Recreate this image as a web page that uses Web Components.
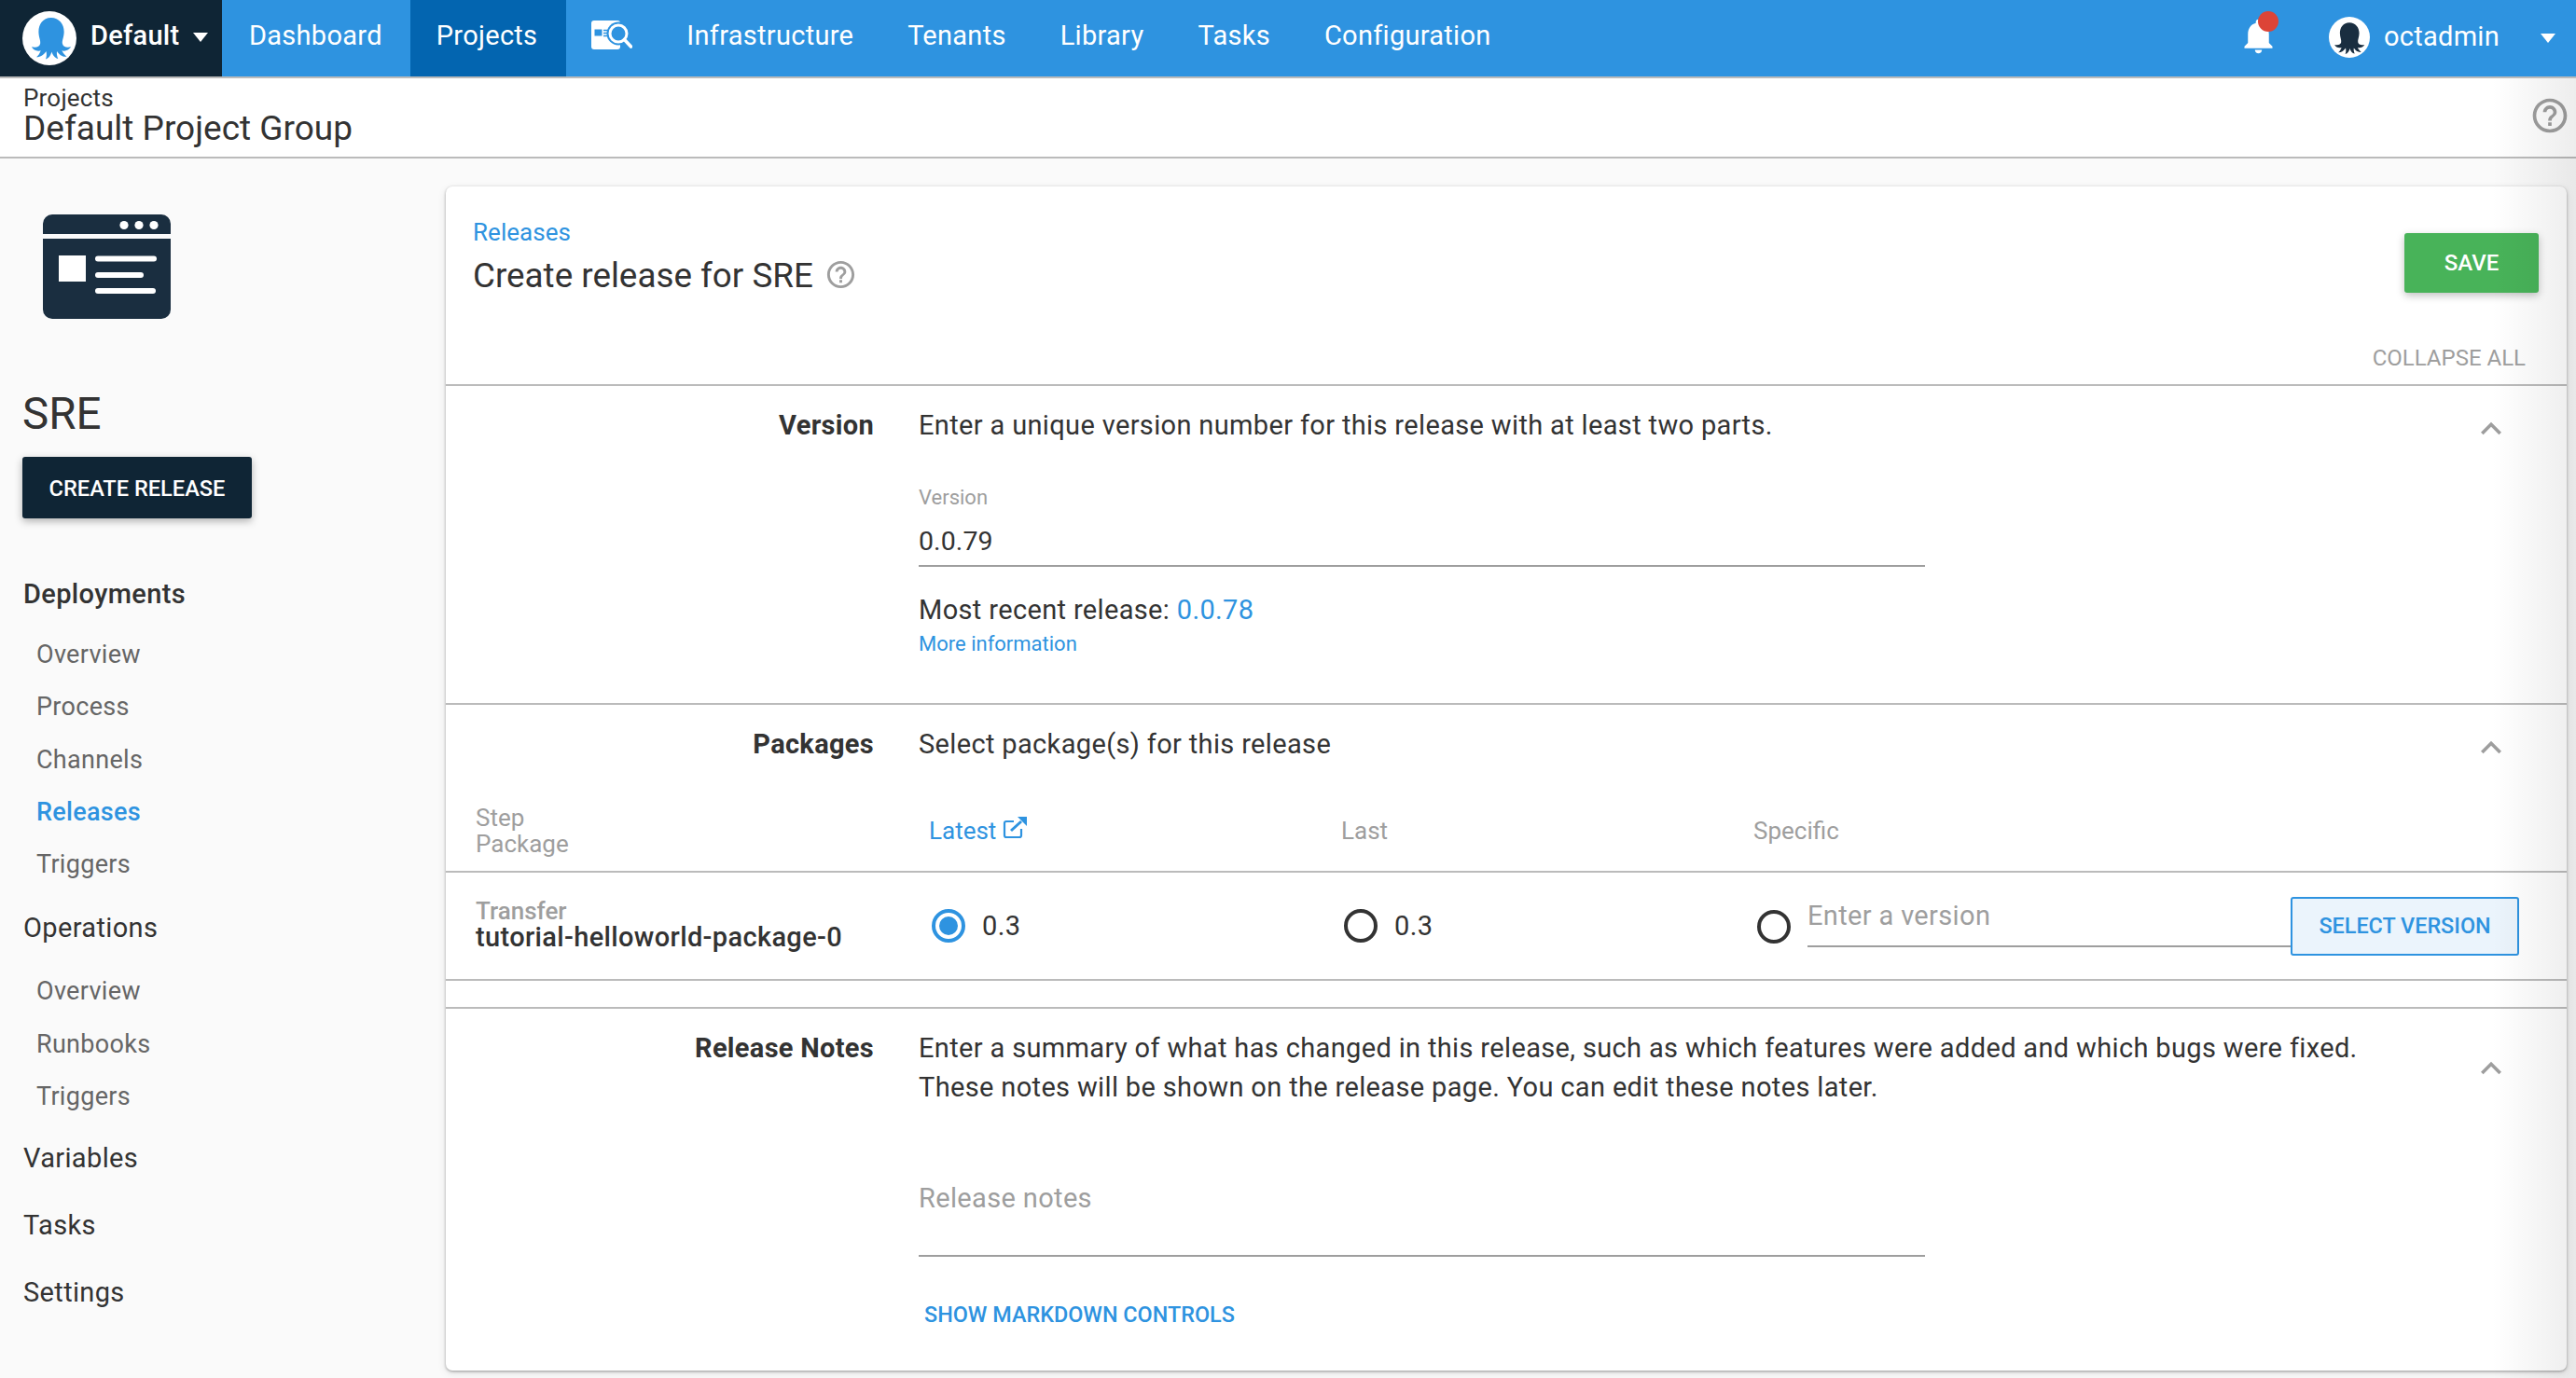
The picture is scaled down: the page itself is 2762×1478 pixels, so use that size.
<!DOCTYPE html>
<html lang="en">
<head>
<meta charset="utf-8">
<title>Create release for SRE</title>
<style>
    html, body {
        margin: 0;
        padding: 0;
        height: 100%;
        overflow: hidden;
        background-color: #fafafa;
        font-family: Roboto, "Liberation Sans", sans-serif;
        color: #333;
    }
</style>
</head>
<body>
<app-page>
    <top-bar slot="top"></top-bar>
    <sub-header slot="top" label="Projects" heading="Default Project Group"></sub-header>
    <side-nav slot="side"></side-nav>
    <page-card slot="main">
        <card-header></card-header>
        <form-section heading="Version">
            <span slot="summary">Enter a unique version number for this release with at least two parts.</span>
            <version-body></version-body>
        </form-section>
        <form-section heading="Packages">
            <span slot="summary">Select package(s) for this release</span>
            <package-table></package-table>
        </form-section>
        <form-section heading="Release Notes" last>
            <span slot="summary">Enter a summary of what has changed in this release, such as which features were added and which bugs were fixed.<br>These notes will be shown on the release page. You can edit these notes later.</span>
            <notes-body></notes-body>
        </form-section>
    </page-card>
</app-page>

<script>
const OCTOPUS = 'M50 14C35 14 27 26 27 40C27 50 31 56 30 62C29 68 22 70 14 68C17 74 24 77 31 75C29 80 27 84 23 87C31 87 37 82 41 76C42 81 42 86 40 91C46 89 50 83 51 77C53 83 57 89 63 90C61 85 60 80 61 76C65 82 71 87 79 86C75 83 72 79 70 75C76 77 83 74 87 68C79 70 72 68 71 62C70 56 74 50 74 40C74 26 65 14 50 14Z'
const HELP = 'M11 18h2v-2h-2v2zm1-16C6.48 2 2 6.48 2 12s4.48 10 10 10 10-4.48 10-10S17.52 2 12 2zm0 18c-4.41 0-8-3.59-8-8s3.59-8 8-8 8 3.59 8 8-3.59 8-8 8zm0-14c-2.21 0-4 1.79-4 4h2c0-1.1.9-2 2-2s2 .9 2 2c0 2-3 1.75-3 5h2c0-2.25 3-2.5 3-5 0-2.21-1.79-4-4-4z'

class AppPage extends HTMLElement {
    constructor() {
        super();
        this.shadow = this.attachShadow({mode: 'open'});
        this.render();
    }
    render() {
        this.shadow.innerHTML = `
        <style>
        :host {
            display: block;
            position: relative;
            width: 2762px;
            height: 1478px;
            overflow: hidden;
        }
        .columns {
            display: grid;
            grid-template-columns: 478px 2274px;
        }
        .edge {
            position: absolute;
            top: 84px;
            right: 0;
            bottom: 0;
            width: 90px;
            background: linear-gradient(to right, rgba(0,0,0,0), rgba(0,0,0,0.07));
            pointer-events: none;
        }
        </style>
        <slot name="top"></slot>
        <div class="columns">
            <slot name="side"></slot>
            <slot name="main"></slot>
        </div>
        <div class="edge"></div>
        `;
    }
}

class TopBar extends HTMLElement {
    constructor() {
        super();
        this.shadow = this.attachShadow({mode: 'open'});
        this.render();
    }
    render() {
        const links = ['Infrastructure', 'Tenants', 'Library', 'Tasks', 'Configuration']
        this.shadow.innerHTML = `
        <style>
        :host {
            display: flex;
            height: 82px;
            background-color: #2e93e0;
            border-bottom: 2px solid #bbb;
            color: #fff;
            font-size: 29px;
            letter-spacing: 0.28px;
            align-items: stretch;
        }
        .space {
            display: flex;
            align-items: center;
            width: 238px;
            box-sizing: border-box;
            padding-left: 24px;
            background-color: #0f2535;
            font-weight: 500;
        }
        .space > span:first-of-type { padding-bottom: 6px; }
        .logo {
            width: 58px;
            height: 58px;
            margin-right: 15px;
        }
        .item {
            display: flex;
            align-items: center;
            padding: 0 29px 6px;
        }
        .item.before { padding-right: 30.5px; }
        .item.active { background-color: #0365b0; padding-left: 27.5px; padding-right: 30.5px; }
        .item.after { padding-left: 27.5px; }
        .caret {
            width: 0;
            height: 0;
            border-left: 8px solid transparent;
            border-right: 8px solid transparent;
            border-top: 10px solid #fff;
        }
        .space .caret { margin-left: 15px; margin-top: -2px; }
        .right {
            margin-left: auto;
            display: flex;
            align-items: center;
            padding-right: 22px;
        }
        .right > span:first-of-type { padding-bottom: 5px; }
        .bell {
            position: relative;
            width: 45px;
            height: 45px;
            margin-right: 53px;
            margin-top: -6px;
        }
        .dot {
            position: absolute;
            top: -4px;
            left: 22px;
            width: 22px;
            height: 22px;
            border-radius: 50%;
            background-color: #dd4437;
        }
        .avatar {
            width: 44px;
            height: 44px;
            margin-right: 15px;
            margin-top: -2px;
        }
        .right .caret { margin-left: 44px; }
        svg { display: block; }
        </style>
        <div class="space">
            <svg class="logo" viewBox="0 0 100 100"><circle cx="50" cy="50" r="50" fill="#fff"/><path transform="translate(3 -2)" fill="#2e93e0" d="${OCTOPUS}"/></svg>
            <span>Default</span>
            <span class="caret"></span>
        </div>
        <div class="item before">Dashboard</div>
        <div class="item active">Projects</div>
        <div class="item after">
            <svg width="44" height="32" viewBox="0 0 44 32">
                <rect x="0" y="0" width="31" height="31" rx="3" fill="#fff"/>
                <rect x="3.5" y="9.5" width="8" height="7" fill="#2e93e0"/>
                <path d="M13 10.5h6M13 13.5h5M13 16.5h6" stroke="#2e93e0" stroke-width="1.6"/>
                <circle cx="29" cy="14" r="12.5" fill="#2e93e0"/>
                <circle cx="29" cy="14" r="9" fill="#2e93e0" stroke="#fff" stroke-width="3"/>
                <path d="M35.5 20.5L42.5 28" stroke="#fff" stroke-width="3.6" stroke-linecap="round"/>
            </svg>
        </div>
        ${links.map(link => `<div class="item">${link}</div>`).join('')}
        <div class="right">
            <div class="bell">
                <svg width="45" height="45" viewBox="0 0 24 24"><path fill="#fff" d="M12 22c1.1 0 2-.9 2-2h-4c0 1.1.9 2 2 2zm6-6v-5c0-3.07-1.63-5.64-4.5-6.32V4c0-.83-.67-1.5-1.5-1.5s-1.5.67-1.5 1.5v.68C7.64 5.36 6 7.92 6 11v5l-2 2v1h16v-1l-2-2z"/></svg>
                <span class="dot"></span>
            </div>
            <svg class="avatar" viewBox="0 0 100 100"><circle cx="50" cy="50" r="50" fill="#fff"/><path fill="#1a2e40" d="${OCTOPUS}"/></svg>
            <span>octadmin</span>
            <span class="caret"></span>
        </div>
        `;
    }
}

class SubHeader extends HTMLElement {
    constructor() {
        super();
        this.shadow = this.attachShadow({mode: 'open'});
        this.render();
    }
    render() {
        this.shadow.innerHTML = `
        <style>
        :host {
            display: flex;
            justify-content: space-between;
            align-items: center;
            height: 84px;
            padding: 0 6px 0 25px;
            background-color: #fff;
            border-bottom: 2px solid #bbb;
        }
        .text { align-self: flex-start; padding-top: 6px; }
        .label {
            font-size: 26px;
            letter-spacing: 0.2px;
            line-height: 30px;
        }
        .heading {
            font-size: 37px;
            line-height: 40px;
            margin-top: -2px;
        }
        svg { display: block; margin-top: -4px; }
        </style>
        <div class="text">
            <div class="label">${this.getAttribute('label')}</div>
            <div class="heading">${this.getAttribute('heading')}</div>
        </div>
        <svg width="44" height="44" viewBox="0 0 24 24"><path fill="#9e9e9e" d="${HELP}"/></svg>
        `;
    }
}

class SideNav extends HTMLElement {
    constructor() {
        super();
        this.shadow = this.attachShadow({mode: 'open'});
        this.render();
    }
    render() {
        const sub = (names, current) => `<div class="sub">${names.map(n =>
            `<div class="row ${n === current ? 'current' : ''}">${n}</div>`).join('')}</div>`
        this.shadow.innerHTML = `
        <style>
        :host {
            display: block;
            padding: 60px 0 0 24px;
        }
        svg { display: block; margin-left: 22px; }
        .name {
            font-size: 47.5px;
            line-height: 60px;
            margin-top: 72px;
            color: #333;
        }
        .create {
            width: 246px;
            height: 66px;
            margin-top: 16px;
            display: flex;
            align-items: center;
            justify-content: center;
            border-radius: 3px;
            background-color: #0f2535;
            color: #fff;
            font-size: 23.6px;
            font-weight: 500;
            padding-top: 1px;
            box-sizing: border-box;
            box-shadow: 0 3px 8px rgba(0,0,0,0.3);
        }
        nav { margin-top: 45px; padding-left: 1px; }
        .head {
            height: 72px;
            line-height: 72px;
            font-size: 29px;
            letter-spacing: 0.35px;
            color: #333;
        }
        .head.strong { font-weight: 500; }
        .sub { padding-left: 14px; padding-top: 1px; margin-bottom: 4px; }
        .head:not(.strong) + .sub { padding-top: 4px; margin-bottom: 2px; }
        .row {
            height: 56.3px;
            line-height: 56.3px;
            font-size: 27px;
            letter-spacing: 0.3px;
            color: #666;
        }
        .row.current { color: #2e93e0; font-weight: 500; }
        </style>
        <svg width="137" height="112" viewBox="0 0 137 112">
            <path fill="#1a2e40" d="M10 0H127A10 10 0 0 1 137 10V21H0V10A10 10 0 0 1 10 0Z"/>
            <path fill="#1a2e40" d="M0 26H137V102A10 10 0 0 1 127 112H10A10 10 0 0 1 0 102Z"/>
            <circle cx="87" cy="11.5" r="4.6" fill="#fff"/>
            <circle cx="103" cy="11.5" r="4.6" fill="#fff"/>
            <circle cx="119" cy="11.5" r="4.6" fill="#fff"/>
            <rect x="17" y="44" width="29" height="28" fill="#fff"/>
            <rect x="56" y="44.5" width="66" height="6" rx="3" fill="#fff"/>
            <rect x="56" y="62" width="52" height="6" rx="3" fill="#fff"/>
            <rect x="56" y="79" width="65" height="6" rx="3" fill="#fff"/>
        </svg>
        <div class="name">SRE</div>
        <div class="create">CREATE RELEASE</div>
        <nav>
            <div class="head strong">Deployments</div>
            ${sub(['Overview', 'Process', 'Channels', 'Releases', 'Triggers'], 'Releases')}
            <div class="head">Operations</div>
            ${sub(['Overview', 'Runbooks', 'Triggers'])}
            <div class="head">Variables</div>
            <div class="head">Tasks</div>
            <div class="head">Settings</div>
        </nav>
        `;
    }
}

class PageCard extends HTMLElement {
    constructor() {
        super();
        this.shadow = this.attachShadow({mode: 'open'});
        this.render();
    }
    render() {
        this.shadow.innerHTML = `
        <style>
        :host {
            display: block;
            height: 1270px;
            margin-top: 30px;
            background-color: #fff;
            border-radius: 7px;
            box-shadow: 0 1px 3px rgba(0,0,0,0.35), 0 3px 10px rgba(0,0,0,0.1);
        }
        </style>
        <slot></slot>
        `;
    }
}

class CardHeader extends HTMLElement {
    constructor() {
        super();
        this.shadow = this.attachShadow({mode: 'open'});
        this.render();
    }
    render() {
        this.shadow.innerHTML = `
        <style>
        :host {
            display: block;
            height: 214px;
            box-sizing: border-box;
            padding: 32px 30px 0 29px;
            border-bottom: 2px solid #bbb;
        }
        .line {
            display: flex;
            justify-content: space-between;
            align-items: flex-start;
        }
        .crumb {
            font-size: 26px;
            letter-spacing: 0.05px;
            line-height: 34px;
            color: #2e93e0;
        }
        .title {
            display: flex;
            align-items: center;
            font-size: 36.8px;
            line-height: 46px;
            margin-top: 7px;
        }
        .title svg { margin-left: 12px; margin-top: -4px; }
        .save {
            width: 144px;
            height: 64px;
            margin-top: 18px;
            display: flex;
            align-items: center;
            justify-content: center;
            border-radius: 3px;
            background-color: #48b359;
            color: #fff;
            font-size: 24px;
            font-weight: 500;
            box-shadow: 0 3px 8px rgba(0,0,0,0.25);
        }
        .collapse {
            text-align: right;
            font-size: 24px;
            line-height: 30px;
            color: #9e9e9e;
            padding-right: 14px;
            margin-top: 50px;
        }
        svg { display: block; }
        </style>
        <div class="line">
            <div>
                <div class="crumb">Releases</div>
                <div class="title">Create release for SRE
                    <svg width="35" height="35" viewBox="0 0 24 24"><path fill="#9e9e9e" d="${HELP}"/></svg>
                </div>
            </div>
            <div class="save">SAVE</div>
        </div>
        <div class="collapse">COLLAPSE ALL</div>
        `;
    }
}

class FormSection extends HTMLElement {
    constructor() {
        super();
        this.shadow = this.attachShadow({mode: 'open'});
        this.render();
    }
    render() {
        const heading = this.getAttribute('heading')
        this.shadow.innerHTML = `
        <style>
        :host {
            display: block;
            border-bottom: 2px solid #bbb;
            font-size: 29px;
            letter-spacing: 0.35px;
        }
        :host([last]) { border-bottom: none; }
        .head {
            display: grid;
            grid-template-columns: 459px 1fr 44px;
            grid-auto-rows: minmax(48px, auto);
            column-gap: 48px;
            padding: 21px 59px 0 0;
            line-height: 42px;
        }
        .heading {
            text-align: right;
            font-weight: 700;
            letter-spacing: 0.3px;
        }
        svg { display: block; align-self: center; margin-top: 2px; }
        </style>
        <div class="head">
            <div class="heading">${heading}</div>
            <div><slot name="summary"></slot></div>
            <svg width="44" height="44" viewBox="0 0 24 24"><path fill="#9e9e9e" d="M12 8l-6 6 1.41 1.41L12 10.83l4.59 4.58L18 14z"/></svg>
        </div>
        <slot></slot>
        `;
    }
}

class VersionBody extends HTMLElement {
    constructor() {
        super();
        this.shadow = this.attachShadow({mode: 'open'});
        this.render();
    }
    render() {
        this.shadow.innerHTML = `
        <style>
        :host {
            display: block;
            padding: 36px 0 48px 507px;
        }
        .label {
            font-size: 22px;
            letter-spacing: 0;
            line-height: 30px;
            color: #9e9e9e;
        }
        .value {
            width: 1079px;
            margin-top: 9px;
            padding-bottom: 2px;
            font-size: 28.5px;
            letter-spacing: 0.1px;
            line-height: 46px;
            border-bottom: 2px solid #9e9e9e;
        }
        .recent {
            margin-top: 26px;
            line-height: 40px;
        }
        .recent a { color: #2e93e0; }
        .more {
            margin-top: 2px;
            font-size: 22px;
            letter-spacing: 0;
            line-height: 30px;
            color: #2e93e0;
        }
        </style>
        <div class="label">Version</div>
        <div class="value">0.0.79</div>
        <div class="recent">Most recent release: <a>0.0.78</a></div>
        <div class="more">More information</div>
        `;
    }
}

class PackageTable extends HTMLElement {
    constructor() {
        super();
        this.shadow = this.attachShadow({mode: 'open'});
        this.render();
    }
    render() {
        this.shadow.innerHTML = `
        <style>
        :host {
            display: block;
            padding-bottom: 28px;
        }
        .row {
            display: grid;
            grid-template-columns: 486px 442px 442px 1fr;
            align-items: center;
            padding: 0 51px 0 32px;
            border-bottom: 2px solid #bbb;
        }
        .titles {
            padding-top: 38px;
            padding-bottom: 15px;
            font-size: 26px;
            letter-spacing: 0;
            line-height: 28px;
            color: #9e9e9e;
        }
        .latest {
            display: flex;
            align-items: center;
            color: #2e93e0;
        }
        .latest svg { margin-left: 7px; margin-top: -6px; }
        .cells { height: 114px; }
        .step { font-size: 26px; letter-spacing: 0; line-height: 28px; color: #9e9e9e; font-weight: 500; margin-top: -4px; }
        .pack { line-height: 28px; color: #333; font-weight: 500; }
        .pick {
            display: flex;
            align-items: center;
            padding-left: 3px;
        }
        .radio {
            flex: none;
            width: 36px;
            height: 36px;
            box-sizing: border-box;
            border-radius: 50%;
            border: 4px solid #333;
            margin-right: 18px;
            display: flex;
            align-items: center;
            justify-content: center;
        }
        .radio.on { border-color: #2e93e0; }
        .radio.on::after {
            content: "";
            width: 20px;
            height: 20px;
            border-radius: 50%;
            background-color: #2e93e0;
        }
        .specific {
            display: flex;
            align-items: center;
            padding-left: 4px;
        }
        .input {
            flex: 1;
            height: 57px;
            box-sizing: border-box;
            padding-top: 2px;
            line-height: 42px;
            color: #9e9e9e;
            border-bottom: 2px solid #9e9e9e;
            margin-top: -6px;
            margin-bottom: 6px;
        }
        .specific .radio { margin-top: 2px; }
        .select {
            flex: none;
            width: 245px;
            height: 63px;
            box-sizing: border-box;
            display: flex;
            align-items: center;
            justify-content: center;
            border: 2px solid #2e93e0;
            border-radius: 3px;
            background-color: #ebf4fc;
            color: #2e93e0;
            font-size: 23.4px;
            letter-spacing: 0;
            font-weight: 500;
        }
        svg { display: block; }
        </style>
        <div class="row titles">
            <div>Step<br>Package</div>
            <div class="latest">Latest
                <svg width="26" height="24" viewBox="0 0 26 24">
                    <path d="M12 5H4a2 2 0 0 0-2 2v13a2 2 0 0 0 2 2h14a2 2 0 0 0 2-2v-7" fill="none" stroke="#2e93e0" stroke-width="2.2"/>
                    <path d="M9 15L20 5" fill="none" stroke="#2e93e0" stroke-width="3"/>
                    <path d="M16 0H26V10Z" fill="#2e93e0"/>
                </svg>
            </div>
            <div>Last</div>
            <div>Specific</div>
        </div>
        <div class="row cells">
            <div>
                <div class="step">Transfer</div>
                <div class="pack">tutorial-helloworld-package-0</div>
            </div>
            <div class="pick"><span class="radio on"></span>0.3</div>
            <div class="pick"><span class="radio"></span>0.3</div>
            <div class="specific">
                <span class="radio"></span>
                <div class="input">Enter a version</div>
                <div class="select">SELECT VERSION</div>
            </div>
        </div>
        `;
    }
}

class NotesBody extends HTMLElement {
    constructor() {
        super();
        this.shadow = this.attachShadow({mode: 'open'});
        this.render();
    }
    render() {
        this.shadow.innerHTML = `
        <style>
        :host {
            display: block;
            padding: 75px 0 0 507px;
        }
        .field {
            width: 1079px;
            padding-bottom: 38px;
            line-height: 46px;
            color: #9e9e9e;
            border-bottom: 2px solid #9e9e9e;
        }
        .show {
            margin: 44px 0 0 6px;
            font-size: 23.4px;
            letter-spacing: 0;
            font-weight: 500;
            line-height: 36px;
            color: #2e93e0;
        }
        </style>
        <div class="field">Release notes</div>
        <div class="show">SHOW MARKDOWN CONTROLS</div>
        `;
    }
}

customElements.define('app-page', AppPage);
customElements.define('top-bar', TopBar);
customElements.define('sub-header', SubHeader);
customElements.define('side-nav', SideNav);
customElements.define('page-card', PageCard);
customElements.define('card-header', CardHeader);
customElements.define('form-section', FormSection);
customElements.define('version-body', VersionBody);
customElements.define('package-table', PackageTable);
customElements.define('notes-body', NotesBody);
</script>
</body>
</html>
